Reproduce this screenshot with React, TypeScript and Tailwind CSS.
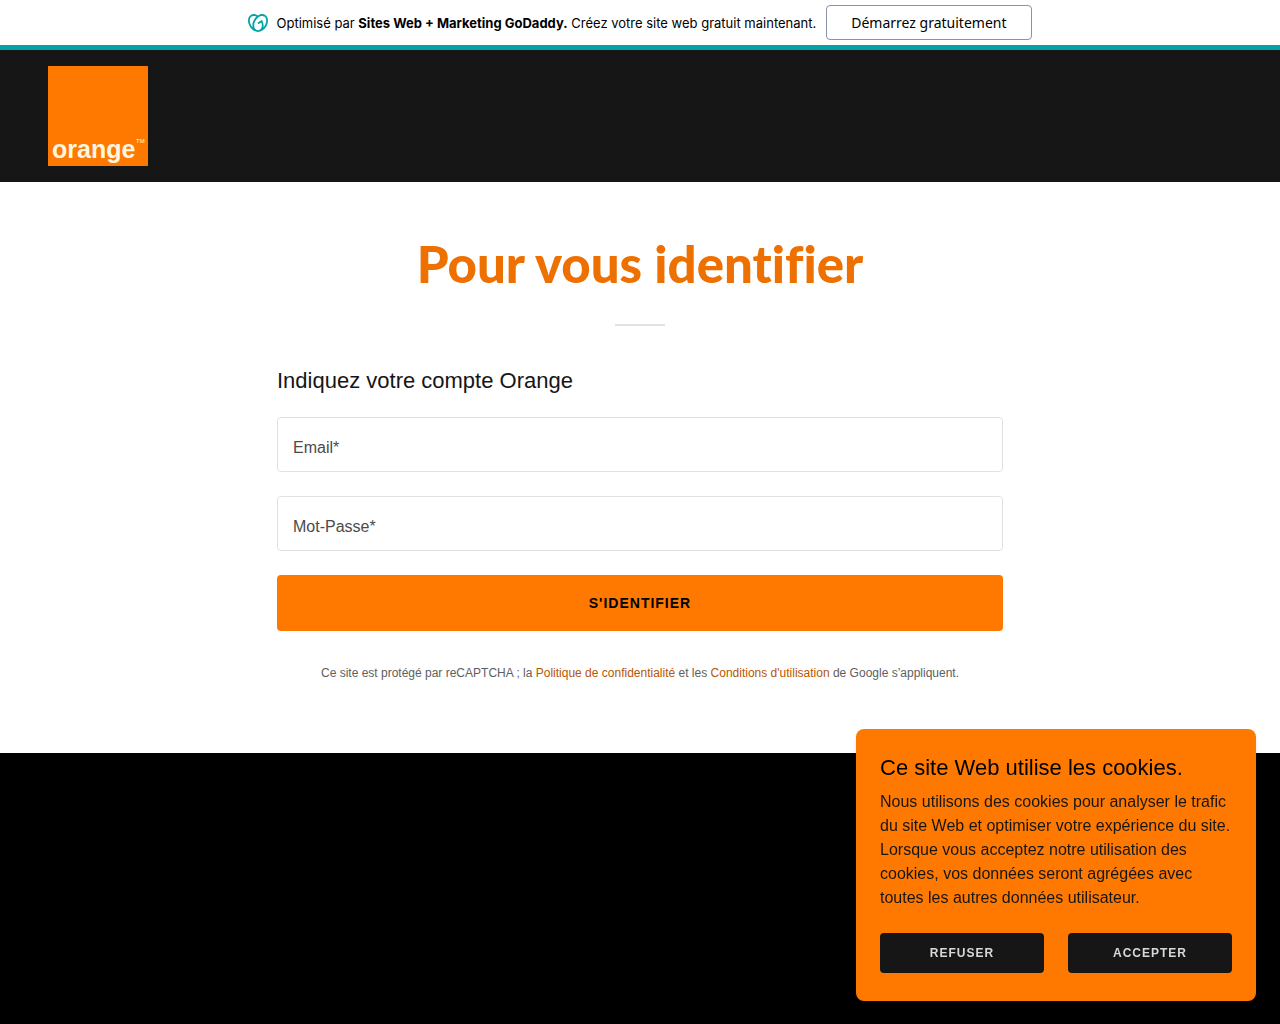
import { useState } from 'react';
import { SiGodaddy } from 'react-icons/si';

interface FieldProps {
  id: string;
  label: string;
  type: string;
}

function Field({ id, label, type }: FieldProps) {
  return (
    <div className="relative">
      <input
        id={id}
        type={type}
        autoComplete="off"
        placeholder=" "
        className="peer block w-full rounded border border-[#e2e2e2] bg-white px-[15px] pt-[23px] pb-[7px] text-base leading-[23px] text-[#161616] outline-none focus:border-[#161616]"
      />
      <label
        htmlFor={id}
        className="pointer-events-none absolute top-1 left-4 text-xs leading-6 text-[#4b4b4b] peer-placeholder-shown:top-[19px] peer-placeholder-shown:text-base peer-placeholder-shown:leading-6"
      >
        {label}
      </label>
    </div>
  );
}

function OrangeLogo() {
  return (
    <svg viewBox="0 0 100 100" className="block size-[100px]" role="img">
      <rect width="100" height="100" fill="#ff7900" />
      <text x="4" y="92" fontFamily="'Liberation Sans', Arial, sans-serif" fontWeight="700" fontSize="25" fill="#fff6e0">
        orange
      </text>
      <text x="88" y="77" fontFamily="'Liberation Sans', Arial, sans-serif" fontSize="6" fill="#fff6e0">
        TM
      </text>
    </svg>
  );
}

function PromoBanner() {
  return (
    <div className="flex min-h-[50px] items-center justify-center gap-[10px] border-b-[5px] border-[#00a4a6] bg-white px-4">
      <p className="flex items-center gap-2 font-['Inter',sans-serif] text-[13px] leading-5 text-black">
        <SiGodaddy className="size-5 shrink-0 text-[#00a4a6]" />
        <span>
          Optimisé par <b className="font-bold">Sites Web + Marketing GoDaddy.</b> Créez votre site web gratuit maintenant.
        </span>
      </p>
      <button
        type="button"
        className="h-[35px] rounded border border-[#8893a8] bg-white px-6 font-['Noto_Sans',sans-serif] text-sm text-black"
      >
        Démarrez gratuitement
      </button>
    </div>
  );
}

function CookieBanner({ onClose }: { onClose: () => void }) {
  return (
    <div className="fixed right-6 bottom-[23px] w-[400px] max-w-[calc(100%-48px)] rounded-lg bg-[#ff7900] px-6 pt-[25px] pb-7 shadow-md">
      <h2 className="mb-2 text-[22px] leading-7 text-black">Ce site Web utilise les cookies.</h2>
      <p className="mb-[23px] text-base leading-6 text-[#161616]">
        Nous utilisons des cookies pour analyser le trafic du site Web et optimiser votre expérience du site. Lorsque
        vous acceptez notre utilisation des cookies, vos données seront agrégées avec toutes les autres données
        utilisateur.
      </p>
      <div className="grid grid-cols-2 gap-6">
        <button
          type="button"
          onClick={onClose}
          className="h-10 rounded bg-[#161616] text-xs font-bold tracking-[1px] text-[#d8d8d8] uppercase"
        >
          Refuser
        </button>
        <button
          type="button"
          onClick={onClose}
          className="h-10 rounded bg-[#161616] text-xs font-bold tracking-[1px] text-[#d8d8d8] uppercase"
        >
          Accepter
        </button>
      </div>
    </div>
  );
}

export default function App() {
  const [showCookies, setShowCookies] = useState(true);

  return (
    <div className="flex min-h-screen flex-col bg-black font-['Liberation_Sans',Arial,sans-serif]">
      <PromoBanner />

      <header className="bg-[#161616] px-12 py-4">
        <a href="#" aria-label="orange" className="inline-block align-top">
          <OrangeLogo />
        </a>
      </header>

      <main className="bg-white px-6 pt-[52px] pb-[70px]">
        <h1 className="text-center font-['Lato',sans-serif] text-[51px] leading-[60px] font-black text-[#ee7000] [font-variant-ligatures:none]">
          Pour vous identifier
        </h1>
        <hr className="mx-auto mt-[30px] w-[50px] border-t-2 border-[#e2e2e2]" />

        <div className="mx-auto mt-[41px] max-w-[726px]">
          <h2 className="mb-[22px] text-[22px] leading-7 text-[#161616]">Indiquez votre compte Orange</h2>
          <div className="flex flex-col gap-6">
            <Field id="email" label="Email*" type="text" />
            <Field id="password" label="Mot-Passe*" type="password" />
            <button
              type="button"
              className="h-14 rounded bg-[#ff7900] text-sm font-bold tracking-[1px] text-black uppercase"
            >
              S'identifier
            </button>
          </div>
          <p className="mt-8 text-center text-xs leading-5 text-[#5e5e5e]">
            Ce site est protégé par reCAPTCHA ; la{' '}
            <a href="#" className="text-[#b85600]">
              Politique de confidentialité
            </a>{' '}
            et les{' '}
            <a href="#" className="text-[#b85600]">
              Conditions d'utilisation
            </a>{' '}
            de Google s’appliquent.
          </p>
        </div>
      </main>

      {showCookies && <CookieBanner onClose={() => setShowCookies(false)} />}
    </div>
  );
}
